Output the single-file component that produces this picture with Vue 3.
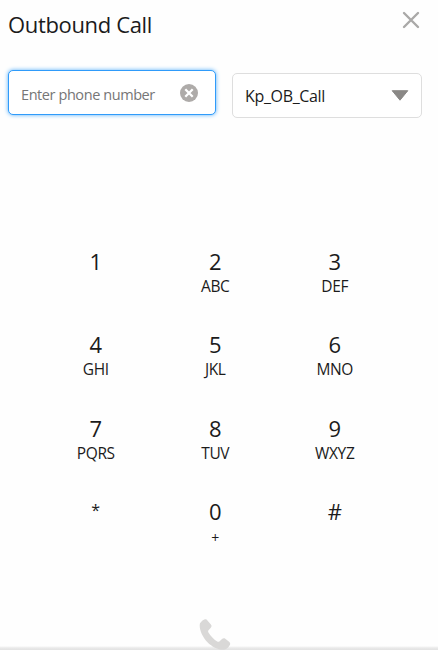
<script setup>
const keys = [
  { digit: '1', letters: '' },
  { digit: '2', letters: 'ABC' },
  { digit: '3', letters: 'DEF' },
  { digit: '4', letters: 'GHI' },
  { digit: '5', letters: 'JKL' },
  { digit: '6', letters: 'MNO' },
  { digit: '7', letters: 'PQRS' },
  { digit: '8', letters: 'TUV' },
  { digit: '9', letters: 'WXYZ' },
  { digit: '*', letters: '' },
  { digit: '0', letters: '+' },
  { digit: '#', letters: '' },
]
</script>

<template>
  <main class="dialer">
    <header class="header">
      <h1 class="title">Outbound Call</h1>
      <svg class="close" viewBox="0 0 18 18"><path d="M2 2 16 16M16 2 2 16" /></svg>
    </header>
    <section class="fields">
      <div class="phone">
        <span class="placeholder">Enter phone number</span>
        <svg class="clear" viewBox="0 0 18 18">
          <circle cx="9" cy="9" r="9" />
          <path d="M5.3 5.3 12.7 12.7M12.7 5.3 5.3 12.7" />
        </svg>
      </div>
      <div class="select">
        <span class="selected">Kp_OB_Call</span>
        <svg class="arrow" viewBox="0 0 18 11"><path d="M1.2.7H16.8L9 10.2Z" /></svg>
      </div>
    </section>
    <section class="keypad">
      <div v-for="key in keys" :key="key.digit" class="key">
        <span class="digit" :class="{ star: key.digit === '*' }">{{ key.digit }}</span>
        <span class="letters" :class="{ plus: key.letters === '+' }">{{ key.letters }}</span>
      </div>
    </section>
    <footer class="footer">
      <svg class="call" viewBox="0 0 32 32">
        <path d="M1 4.3C2.5 2.4 4 .9 5.4.5C6.7.1 7.7.7 8.6 1.7L11.9 5.4C12.8 6.5 12.7 7.6 11.8 8.7L9.5 11.2C8.9 12 9 12.7 9.6 13.7C11.8 17.1 14.6 20.2 18.2 22.4C19.1 22.9 19.9 22.9 20.6 22.2L23 20C24.1 19.1 25.2 18.9 26.3 19.7L30.1 22.8C31.3 23.8 31.5 24.9 30.8 26.1C29.8 28.1 28 29.8 26 30.5C21.5 31.9 13.8 28.8 8.5 23.3C3.2 17.8-.4 9.2 1 4.3Z" />
      </svg>
    </footer>
  </main>
</template>

<style>
body {
  background: #fefefe;
}
</style>

<style scoped>
.dialer {
  display: flex;
  flex-direction: column;
  box-sizing: border-box;
  width: 438px;
  height: 650px;
  overflow: hidden;
  background: #fefefe;
  color: #1b1b1b;
  font-family: "Open Sans", "Noto Sans", sans-serif;
}
.header {
  display: flex;
  justify-content: space-between;
  align-items: flex-start;
  height: 70px;
  padding: 9px 18px 0 8px;
  box-sizing: border-box;
}
.title {
  margin: 0;
  font-size: 22px;
  font-weight: 400;
  line-height: 30px;
  letter-spacing: -0.35px;
}
.close {
  width: 18px;
  height: 18px;
  margin-top: 2px;
  fill: none;
  stroke: #aaa9a8;
  stroke-width: 2.4;
  stroke-linecap: round;
}
.fields {
  display: flex;
  gap: 16px;
  height: 48px;
  padding: 0 16px 0 8px;
}
.phone,
.select {
  display: flex;
  align-items: center;
  justify-content: space-between;
  box-sizing: border-box;
  height: 45px;
  border-radius: 5px;
  background: #fff;
}
.phone {
  width: 208px;
  padding: 0 17px 0 12px;
  border: 1px solid #2f9bfa;
  box-shadow: 0 0 4px #55aefa;
}
.placeholder {
  padding-top: 4px;
  color: #767676;
  font-size: 14.5px;
  line-height: 20px;
  letter-spacing: -0.42px;
}
.clear {
  width: 18px;
  height: 18px;
}
.clear circle {
  fill: #aeaba9;
}
.clear path {
  fill: none;
  stroke: #fff;
  stroke-width: 2.3;
}
.select {
  width: 190px;
  margin-top: 3px;
  padding: 0 12px;
  border: 1px solid #dedede;
}
.selected {
  font-size: 16px;
  line-height: 22px;
  letter-spacing: -0.35px;
}
.arrow {
  width: 18px;
  height: 11px;
}
.arrow path {
  fill: #8a8886;
  stroke: #8a8886;
  stroke-width: 1;
  stroke-linejoin: round;
}
.keypad {
  display: grid;
  grid-template-columns: repeat(3, 119.5px);
  grid-auto-rows: 83.4px;
  padding: 128px 0 0 36px;
}
.key {
  display: flex;
  flex-direction: column;
  align-items: center;
}
.digit {
  font-size: 22px;
  line-height: 30px;
}
.star {
  font-size: 16px;
  line-height: 28px;
}
.letters {
  height: 20px;
  font-size: 15.5px;
  line-height: 20px;
  letter-spacing: -0.35px;
}
.plus {
  font-size: 14px;
  line-height: 23px;
  letter-spacing: 0;
}
.footer {
  display: flex;
  flex: 1;
  align-items: flex-end;
  justify-content: center;
  padding-right: 8px;
  background: linear-gradient(to top, #e2e2e2 0, #e9e9e9 2px, #fefefe 4px);
}
.call {
  width: 32px;
  height: 32px;
  margin-bottom: -1px;
  fill: #d9d8d7;
}
</style>
